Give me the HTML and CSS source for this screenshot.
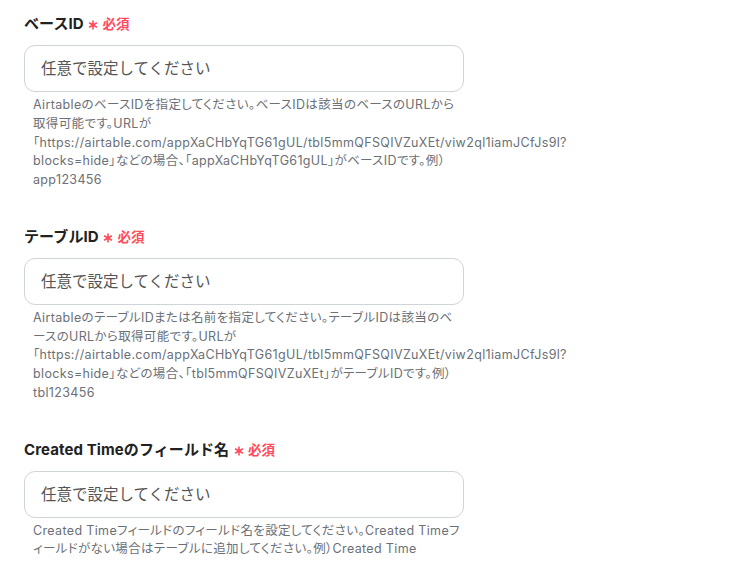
FILE: index.html
```html
<!DOCTYPE html>
<html lang="ja">
<head>
    <meta charset="UTF-8">
    <meta name="viewport" content="width=device-width, initial-scale=1.0">
    <title>Airtable設定</title>
    <link rel="stylesheet" href="styles.css">
</head>
<body>
    <form class="settings">
        <div class="field">
            <label class="label" for="baseId">ベースID <span class="req"><svg class="star" viewBox="0 0 10 10"><path d="M5 0.5V9.5M1.1 2.75L8.9 7.25M1.1 7.25L8.9 2.75"/></svg>必須</span></label>
            <input class="input" type="text" id="baseId" placeholder="任意で設定してください">
            <p class="help">AirtableのベースIDを指定してください。ベースIDは該当のベースのURLから取得可能です。URLが「https://airtable.com/appXaCHbYqTG61gUL/tbl5mmQFSQIVZuXEt/viw2ql1iamJCfJs9l?blocks=hide」などの場合、「appXaCHbYqTG61gUL」がベースIDです。例）app123456</p>
        </div>

        <div class="field">
            <label class="label" for="tableId">テーブルID <span class="req"><svg class="star" viewBox="0 0 10 10"><path d="M5 0.5V9.5M1.1 2.75L8.9 7.25M1.1 7.25L8.9 2.75"/></svg>必須</span></label>
            <input class="input" type="text" id="tableId" placeholder="任意で設定してください">
            <p class="help">AirtableのテーブルIDまたは名前を指定してください。テーブルIDは該当のベースのURLから取得可能です。URLが「https://airtable.com/appXaCHbYqTG61gUL/tbl5mmQFSQIVZuXEt/viw2ql1iamJCfJs9l?blocks=hide」などの場合、「tbl5mmQFSQIVZuXEt」がテーブルIDです。例）tbl123456</p>
        </div>

        <div class="field">
            <label class="label" for="createdTime">Created Timeのフィールド名 <span class="req"><svg class="star" viewBox="0 0 10 10"><path d="M5 0.5V9.5M1.1 2.75L8.9 7.25M1.1 7.25L8.9 2.75"/></svg>必須</span></label>
            <input class="input" type="text" id="createdTime" placeholder="任意で設定してください">
            <p class="help">Created Timeフィールドのフィールド名を設定してください。Created Timeフィールドがない場合はテーブルに追加してください。例）Created Time</p>
        </div>
    </form>
</body>
</html>
```

FILE: styles.css
```css
body {
    margin: 0;
    background: #fff;
    font-family: Inter, "Noto Sans CJK JP", sans-serif;
    color: #222;
}
.settings {
    padding: 14px 24px;
    width: 440px;
}
.field {
    margin-bottom: 37px;
}
.label {
    display: block;
    font-size: 15px;
    font-weight: 700;
    line-height: 20px;
    letter-spacing: 0.1px;
    color: #222;
}
.req {
    color: #ff4b5c;
    font-size: 13.5px;
    margin-left: 1px;
}
.star {
    display: inline-block;
    width: 10px;
    height: 10px;
    margin-right: 4px;
    vertical-align: -1px;
    stroke: #ff4b5c;
    stroke-width: 1.6;
    fill: none;
}
.input {
    display: block;
    box-sizing: border-box;
    width: 440px;
    height: 47px;
    margin-top: 11px;
    padding: 0 16px;
    border: 1px solid #cfd3da;
    border-radius: 11px;
    font-family: inherit;
    font-size: 15.5px;
    color: #222;
    outline: none;
}
.input::placeholder {
    color: #555;
}
.help {
    margin: 4px 0 0;
    padding: 0 0 0 9px;
    font-size: 12.5px;
    letter-spacing: 0.35px;
    font-feature-settings: "palt";
    line-height: 18.75px;
    color: #6b6f76;
}
```
